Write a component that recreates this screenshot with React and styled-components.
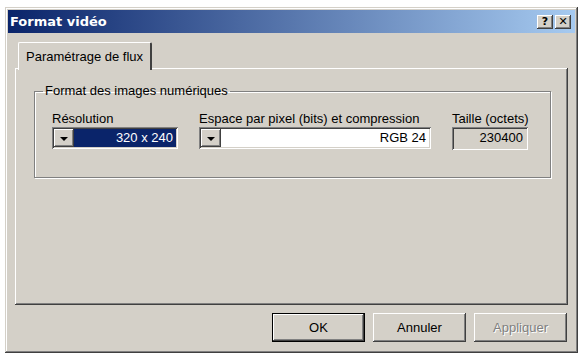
import styled, { createGlobalStyle } from 'styled-components';

const GlobalStyle = createGlobalStyle`
  html, body {
    margin: 0;
    padding: 0;
    background: #ffffff;
  }
  body {
    font-family: "Liberation Sans", Arial, sans-serif;
    font-size: 13px;
    color: #000000;
  }
`;

const raised = `
  box-shadow: inset -1px -1px #404040, inset 1px 1px #ffffff,
    inset -2px -2px #808080, inset 2px 2px #d4d0c8;
`;

const sunken = `
  box-shadow: inset 1px 1px #808080, inset -1px -1px #ffffff,
    inset 2px 2px #404040, inset -2px -2px #d4d0c8;
`;

const Window = styled.div`
  box-sizing: border-box;
  margin: 7px 0 0 5px;
  width: 573px;
  height: 346px;
  background: #d4d0c8;
  padding: 3px;
  display: flex;
  flex-direction: column;
  box-shadow: inset -1px -1px #404040, inset 1px 1px #d4d0c8,
    inset -2px -2px #808080, inset 2px 2px #ffffff;
`;

const TitleBar = styled.div`
  height: 23px;
  display: flex;
  align-items: center;
  padding: 0 4px 0 2px;
  background: linear-gradient(to right, #0a246a, #a6caf0);
`;

const Title = styled.span`
  flex: 1;
  color: #ffffff;
  font-family: "DejaVu Sans", Tahoma, sans-serif;
  font-weight: bold;
  font-size: 13px;
`;

const CaptionButton = styled.button`
  box-sizing: border-box;
  width: 16px;
  height: 14px;
  margin-left: 2px;
  padding: 0;
  border: none;
  background: #d4d0c8;
  font-family: "DejaVu Sans", Tahoma, sans-serif;
  font-weight: bold;
  font-size: 11px;
  line-height: 12px;
  color: #000000;
  display: flex;
  align-items: center;
  justify-content: center;
  ${raised}
`;

const Body = styled.div`
  flex: 1;
  display: flex;
  flex-direction: column;
  padding: 9px 7px 8px 7px;
`;

const TabStrip = styled.div`
  display: flex;
  height: 26px;
  padding-left: 3px;
`;

const Tab = styled.div`
  box-sizing: border-box;
  padding: 0 7px;
  display: flex;
  align-items: center;
  height: 28px;
  background: #d4d0c8;
  border-top: 1px solid #ffffff;
  border-left: 1px solid #ffffff;
  border-right: 2px solid #404040;
  border-top-left-radius: 2px;
  border-top-right-radius: 2px;
  position: relative;
  z-index: 1;
`;

const TabPanel = styled.div`
  box-sizing: border-box;
  height: 237px;
  background: #d4d0c8;
  padding: 16px 17px 0 19px;
  box-shadow: inset -1px -1px #404040, inset 1px 1px #ffffff,
    inset -2px -2px #808080;
`;

const Group = styled.fieldset`
  box-sizing: border-box;
  margin: 0;
  height: 94px;
  padding: 13px 17px 0 17px;
  border: 1px solid #808080;
  box-shadow: 1px 1px #ffffff, inset 1px 1px #ffffff;
  display: grid;
  grid-template-columns: 126px 232px 78px;
  column-gap: 21px;
  align-content: start;

  legend {
    padding: 0 2px;
    margin-left: -9px;
    line-height: 14px;
  }
`;

const Field = styled.div`
  display: flex;
  flex-direction: column;
`;

const Label = styled.span`
  line-height: 15px;
  height: 16px;
  white-space: nowrap;
`;

const Combo = styled.div`
  box-sizing: border-box;
  height: 22px;
  width: ${(p) => p.width}px;
  padding: 2px;
  display: flex;
  background: ${(p) => (p.selected ? '#0a246a' : '#ffffff')};
  ${sunken}
`;

const DropButton = styled.div`
  box-sizing: border-box;
  width: 20px;
  height: 18px;
  background: #d4d0c8;
  display: flex;
  align-items: center;
  justify-content: center;
  ${raised}
`;

const Arrow = styled.span`
  width: 0;
  height: 0;
  border-left: 4px solid transparent;
  border-right: 4px solid transparent;
  border-top: 4px solid #000000;
  margin-top: 1px;
`;

const Value = styled.span`
  flex: 1;
  text-align: right;
  padding-right: 3px;
  line-height: 18px;
  color: ${(p) => (p.selected ? '#ffffff' : '#000000')};
  background: ${(p) => (p.selected ? '#0a246a' : '#ffffff')};
  margin-left: 1px;
`;

const ReadOnlyBox = styled.div`
  box-sizing: border-box;
  height: 23px;
  width: 76px;
  padding: 0 5px;
  text-align: right;
  line-height: 21px;
  background: #d4d0c8;
  ${sunken}
`;

const ButtonRow = styled.div`
  display: flex;
  justify-content: flex-end;
  gap: 8px;
  margin-top: 8px;
  padding-right: 1px;
`;

const PushButton = styled.button`
  box-sizing: border-box;
  width: 93px;
  height: 29px;
  border: ${(p) => (p.primary ? '1px solid #000000' : 'none')};
  background: #d4d0c8;
  font-family: "Liberation Sans", Arial, sans-serif;
  font-size: 13px;
  color: ${(p) => (p.disabled ? '#808080' : '#000000')};
  text-shadow: ${(p) => (p.disabled ? '1px 1px #ffffff' : 'none')};
  padding: 0;
  ${raised}
`;

export default function App() {
  return (
    <>
      <GlobalStyle />
      <Window>
        <TitleBar>
          <Title>Format vidéo</Title>
          <CaptionButton>?</CaptionButton>
          <CaptionButton>✕</CaptionButton>
        </TitleBar>
        <Body>
          <TabStrip>
            <Tab>Paramétrage de flux</Tab>
          </TabStrip>
          <TabPanel>
            <Group>
              <legend>Format des images numériques</legend>
              <Field>
                <Label>Résolution</Label>
                <Combo width={126} selected>
                  <DropButton>
                    <Arrow />
                  </DropButton>
                  <Value selected>320 x 240</Value>
                </Combo>
              </Field>
              <Field>
                <Label>Espace par pixel (bits) et compression</Label>
                <Combo width={232}>
                  <DropButton>
                    <Arrow />
                  </DropButton>
                  <Value>RGB 24</Value>
                </Combo>
              </Field>
              <Field>
                <Label>Taille (octets)</Label>
                <ReadOnlyBox>230400</ReadOnlyBox>
              </Field>
            </Group>
          </TabPanel>
          <ButtonRow>
            <PushButton primary>OK</PushButton>
            <PushButton>Annuler</PushButton>
            <PushButton disabled>Appliquer</PushButton>
          </ButtonRow>
        </Body>
      </Window>
    </>
  );
}
